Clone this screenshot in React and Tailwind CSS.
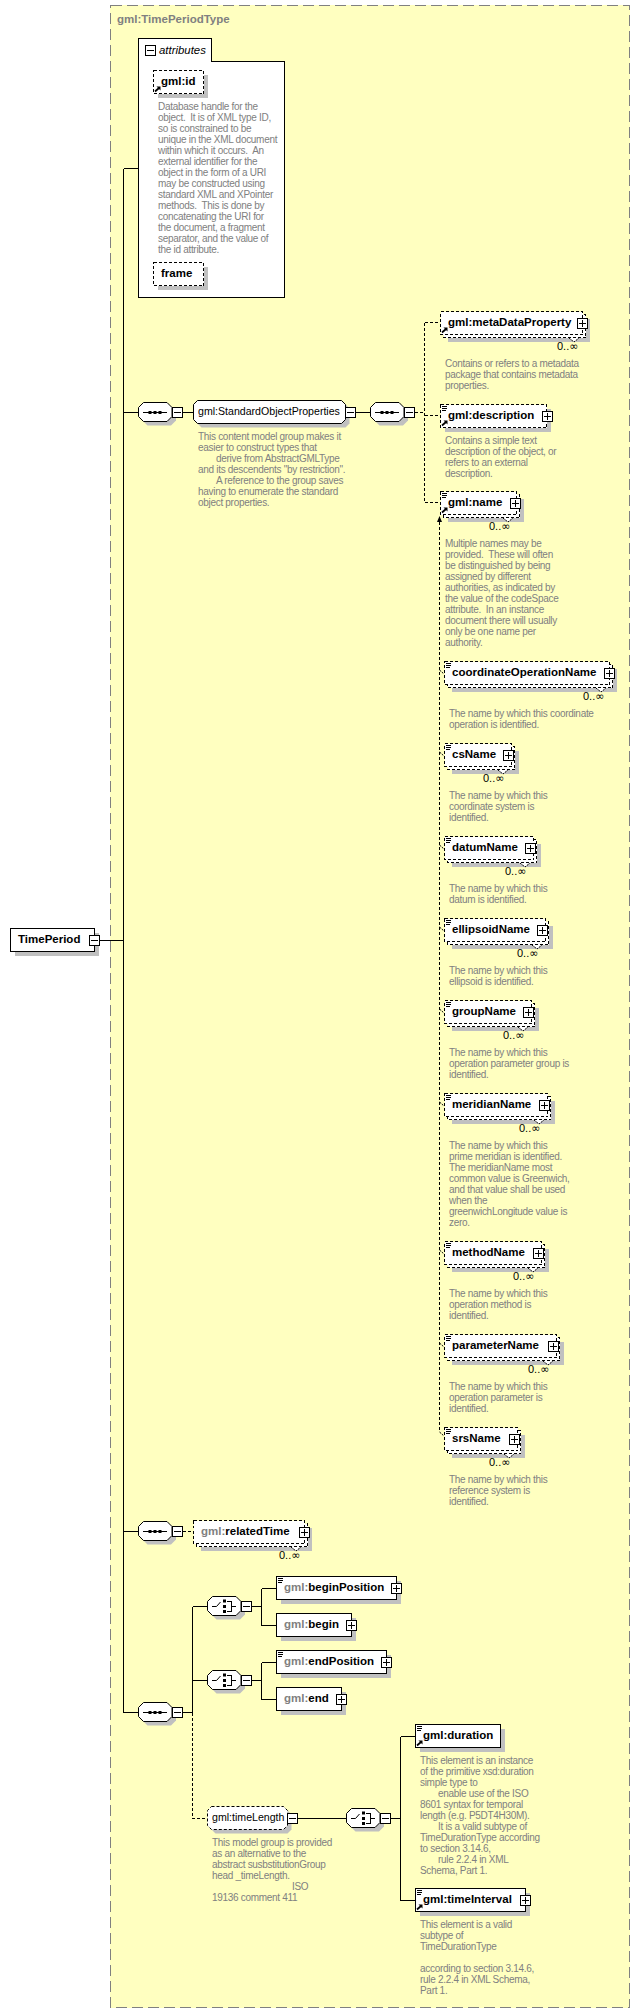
// XML schema diagram for gml:TimePeriod
const SHADOW = '#c0c0c0';

function Plus({ x, y, minus }) {
  return (
    <g shapeRendering="crispEdges">
      <rect x={x + 0.5} y={y + 0.5} width={10} height={10} fill="#fff" stroke="#000" />
      <path d={`M${x + 2} ${y + 5.5}H${x + 9}`} stroke="#000" />
      {!minus && <path d={`M${x + 5.5} ${y + 2}V${y + 9}`} stroke="#000" />}
    </g>
  );
}

function RefArrow({ h }) {
  return (
    <g>
      <path d={`M2 ${h - 2.5}L6 ${h - 6}`} stroke="#000" strokeWidth="1.8" />
      <path d={`M3.5 ${h - 7.5}H7.5V${h - 3.5}Z`} fill="#000" />
    </g>
  );
}

function LinesIcon() {
  return <path d="M2 2.5H7M2 4.5H7M2 6.5H6" stroke="#000" shapeRendering="crispEdges" />;
}

function Doc({ lines, stacked }) {
  return (
    <div className={`whitespace-pre pl-[5px] text-[10px] leading-[11px] tracking-[-0.3px] text-[#808080] ${stacked ? 'pt-[23px]' : 'pt-[7px]'}`}>
      {lines.map((l, i) => (
        <div key={i} className={`h-[11px] ${l.startsWith('>>') ? 'pl-[80px]' : l.startsWith('>') ? 'pl-[18px]' : ''}`}>
          {l.replace(/^>+/, '')}
        </div>
      ))}
    </div>
  );
}

// element or attribute box on the diagram canvas, with its documentation below
function Node({ x, y, w, h = 24, name, prefix, dashed, stacked, lines, refer, plus, occurs, regular, octa, doc }) {
  const dash = dashed ? '3 2' : undefined;
  const chamfer = octa ? 4 : 0;
  const outline = (ox, oy) => {
    const l = ox + 0.5, t = oy + 0.5, r = ox + w - 0.5, b = oy + h - 0.5, c = chamfer;
    return c
      ? `M${l + c} ${t}H${r - c}L${r} ${t + c}V${b - c}L${r - c} ${b}H${l + c}L${l} ${b - c}V${t + c}Z`
      : `M${l} ${t}H${r}V${b}H${l}Z`;
  };
  return (
    <div className="absolute flex flex-col" style={{ left: x, top: y }}>
      <div className="relative shrink-0" style={{ width: w, height: h }}>
        <svg className="absolute left-0 top-0 overflow-visible" width={w} height={h}>
          <path d={outline(stacked ? 7 : 4, stacked ? 7 : 4)} fill={SHADOW} shapeRendering={octa ? undefined : 'crispEdges'} />
          {stacked && (
            <g>
              <path d={`M${w - 14} ${h + 3}L${w - 9} ${h + 7}L${w - 4} ${h + 3}`} fill="#fff" stroke="#000" strokeDasharray="2 1" />
              <path d={outline(3, 3)} fill="#fff" stroke="#000" strokeDasharray={dash} shapeRendering="crispEdges" />
            </g>
          )}
          <path d={outline(0, 0)} fill="#fff" stroke="#000" strokeDasharray={dash} shapeRendering={octa ? undefined : 'crispEdges'} />
          {lines && <LinesIcon />}
          {refer && <RefArrow h={h} />}
          {plus !== undefined && <Plus x={plus - x} y={Math.round(h / 2) - 5} />}
          {octa && <Plus x={w - 1} y={Math.round(h / 2) - 5} minus />}
        </svg>
        <span
          className={`absolute top-0 whitespace-pre leading-[23px] text-black ${regular ? 'left-[5px] text-[10.6px] font-normal' : 'left-[8px] text-[11.5px] font-bold'}`}
        >
          {prefix && <span className="text-[#808080]">{prefix}</span>}
          {name}
        </span>
        {occurs !== undefined && (
          <span className="absolute whitespace-pre text-[11px] leading-[12px] text-black" style={{ left: occurs - x, top: h + 5 }}>
            0..<span className="[font-family:'DejaVu_Sans',sans-serif]">∞</span>
          </span>
        )}
      </div>
      {doc && <Doc lines={doc} stacked={stacked} />}
    </div>
  );
}

// sequence / choice compositor
function Compositor({ x, cy, choice }) {
  return (
    <svg className="absolute overflow-visible" style={{ left: x, top: cy - 10 }} width={34} height={20}>
      <path d="M9.5 4.5H33L38 9.5V18.5L33 23.5H9.5L4.5 18.5V9.5Z" fill={SHADOW} />
      <path d="M5.5 0.5H29L34 5.5V14.5L29 19.5H5.5L0.5 14.5V5.5Z" fill="#fff" stroke="#000" />
      {choice ? (
        <g>
          <path d="M5 10.5H9.5L13.5 6" fill="none" stroke="#000" />
          <path d="M16 3.5h3v3h-3zM16 9h3v3h-3zM16 14h3v3h-3z" fill="#000" />
          <path d="M19.5 5.5H24.5V15.5H19.5M24.5 10.5H29" fill="none" stroke="#000" shapeRendering="crispEdges" />
        </g>
      ) : (
        <g>
          <path d="M5 10.5H29" stroke="#000" shapeRendering="crispEdges" />
          <path d="M10.5 9h3v3h-3zM15.5 9h3v3h-3zM20.5 9h3v3h-3z" fill="#000" />
        </g>
      )}
      <Plus x={34} y={5} minus />
    </svg>
  );
}

const subs = [
  { name: 'coordinateOperationName', y: 661, w: 166, plus: 604, occurs: 583, doc: ['The name by which this coordinate', 'operation is identified.'] },
  { name: 'csName', y: 743, w: 68, plus: 503, occurs: 483, doc: ['The name by which this', 'coordinate system is', 'identified.'] },
  { name: 'datumName', y: 836, w: 90, plus: 525, occurs: 505, doc: ['The name by which this', 'datum is identified.'] },
  { name: 'ellipsoidName', y: 918, w: 102, plus: 537, occurs: 517, doc: ['The name by which this', 'ellipsoid is identified.'] },
  { name: 'groupName', y: 1000, w: 88, plus: 523, occurs: 503, doc: ['The name by which this', 'operation parameter group is', 'identified.'] },
  { name: 'meridianName', y: 1093, w: 104, plus: 539, occurs: 519, doc: ['The name by which this', 'prime meridian is identified.', 'The meridianName most', 'common value is Greenwich,', 'and that value shall be used', 'when the', 'greenwichLongitude value is', 'zero.'] },
  { name: 'methodName', y: 1241, w: 98, plus: 533, occurs: 513, doc: ['The name by which this', 'operation method is', 'identified.'] },
  { name: 'parameterName', y: 1334, w: 113, plus: 548, occurs: 528, doc: ['The name by which this', 'operation parameter is', 'identified.'] },
  { name: 'srsName', y: 1427, w: 74, plus: 509, occurs: 489, doc: ['The name by which this', 'reference system is', 'identified.'] },
];

export default function App() {
  return (
    <div className="relative h-[2013px] w-[640px] overflow-hidden bg-white [font-family:'Liberation_Sans',Arial,sans-serif]">
      {/* type panel */}
      <div className="absolute left-[110px] top-[5px] h-[2003px] w-[520px] bg-[#ffffc0]">
        <svg className="absolute left-0 top-0" width="520" height="2003">
          <rect x="0.5" y="0.5" width="519" height="2002" fill="none" stroke="#808080" strokeDasharray="11 5" shapeRendering="crispEdges" />
        </svg>
        <span className="absolute left-[7px] top-[7px] text-[11.5px] font-bold leading-[14px] text-[#808080]">gml:TimePeriodType</span>
      </div>

      {/* connectors */}
      <svg className="absolute left-0 top-0" width="640" height="2013" fill="none" stroke="#000" shapeRendering="crispEdges">
        <path d="M100 940.5H123.5M123.5 168.5V1712.5M123.5 168.5H138M123.5 412.5H138M123.5 1531.5H138M123.5 1712.5H138" />
        <path d="M183 412.5H193M356 412.5H370" />
        <path d="M183 1712.5H192.5M192.5 1606.5V1712.5M192.5 1606.5H207M192.5 1680.5H207" />
        <path d="M252 1606.5H261.5M261.5 1588.5V1625.5M261.5 1588.5H276M261.5 1625.5H276" />
        <path d="M252 1680.5H261.5M261.5 1662.5V1699.5M261.5 1662.5H276M261.5 1699.5H276" />
        <path d="M298 1818.5H346M391 1818.5H400.5M400.5 1736.5V1900.5M400.5 1736.5H415M400.5 1900.5H415" />
        <g strokeDasharray="3 2">
          <path d="M415 412.5H424.5M424.5 322.5V502.5M424.5 322.5H440M424.5 415.5H440M424.5 502.5H440" />
          <path d="M183 1531.5H193" />
          <path d="M192.5 1713V1818.5H207" />
          <path d="M439.5 522V1432" />
        </g>
      </svg>
      <svg className="absolute left-0 top-0" width="640" height="2013">
        <path d="M439.5 516L437 522H442Z" fill="#000" />
        <path d="M439.5 670L444 674M439.5 752L444 756M439.5 845L444 849M439.5 927L444 931M439.5 1009L444 1013M439.5 1102L444 1106M439.5 1250L444 1254M439.5 1343L444 1347M439.5 1432L444 1436" stroke="#000" strokeDasharray="2 1" fill="none" />
      </svg>

      {/* attributes */}
      <div className="absolute left-[138px] top-[61px] h-[237px] w-[147px] border border-black bg-white" />
      <div className="absolute left-[138px] top-[38px] flex h-[24px] w-[74px] items-start gap-[3px] border border-b-0 border-black bg-white pl-[6px] pt-[6px]">
        <svg className="shrink-0" width="11" height="11"><Plus x={0} y={0} minus /></svg>
        <span className="text-[11.4px] italic leading-[11px] text-black">attributes</span>
      </div>
      <Node x={153} y={70} w={51} name="gml:id" dashed refer doc={['Database handle for the', 'object.  It is of XML type ID,', 'so is constrained to be', 'unique in the XML document', 'within which it occurs.  An', 'external identifier for the', 'object in the form of a URI', 'may be constructed using', 'standard XML and XPointer', 'methods.  This is done by', 'concatenating the URI for', 'the document, a fragment', 'separator, and the value of', 'the id attribute.']} />
      <Node x={153} y={262} w={51} name="frame" dashed />

      {/* root */}
      <Node x={10} y={928} w={85} name="TimePeriod" />
      <svg className="absolute left-[89px] top-[935px]" width="11" height="11"><Plus x={0} y={0} minus /></svg>

      {/* standard object properties */}
      <Compositor x={138} cy={412} />
      <Node x={193} y={400} w={153} name="gml:StandardObjectProperties" regular octa doc={['This content model group makes it', 'easier to construct types that', '>derive from AbstractGMLType', 'and its descendents "by restriction".', '>A reference to the group saves', 'having to enumerate the standard', 'object properties.']} />
      <Compositor x={370} cy={412} />

      <Node x={440} y={311} w={143} name="gml:metaDataProperty" dashed stacked refer plus={577} occurs={557} doc={['Contains or refers to a metadata', 'package that contains metadata', 'properties.']} />
      <Node x={440} y={404} w={107} name="gml:description" dashed lines refer plus={542} doc={['Contains a simple text', 'description of the object, or', 'refers to an external', 'description.']} />
      <Node x={440} y={491} w={77} name="gml:name" dashed stacked lines refer plus={510} occurs={489} doc={['Multiple names may be', 'provided.  These will often', 'be distinguished by being', 'assigned by different', 'authorities, as indicated by', 'the value of the codeSpace', 'attribute.  In an instance', 'document there will usually', 'only be one name per', 'authority.']} />

      {subs.map((s) => (
        <Node key={s.name} x={444} y={s.y} w={s.w} name={s.name} dashed stacked lines plus={s.plus} occurs={s.occurs} doc={s.doc} />
      ))}

      {/* related time */}
      <Compositor x={138} cy={1531} />
      <Node x={193} y={1520} w={112} prefix="gml:" name="relatedTime" dashed stacked plus={299} occurs={279} />

      {/* begin / end */}
      <Compositor x={138} cy={1712} />
      <Compositor x={207} cy={1606} choice />
      <Node x={276} y={1576} w={121} prefix="gml:" name="beginPosition" lines plus={391} />
      <Node x={276} y={1613} w={76} prefix="gml:" name="begin" plus={346} />
      <Compositor x={207} cy={1680} choice />
      <Node x={276} y={1650} w={111} prefix="gml:" name="endPosition" lines plus={381} />
      <Node x={276} y={1687} w={66} prefix="gml:" name="end" plus={336} />

      {/* time length */}
      <Node x={207} y={1806} w={81} name="gml:timeLength" regular octa dashed doc={['This model group is provided', 'as an alternative to the', 'abstract susbstitutionGroup', 'head _timeLength.', '>>ISO', '19136 comment 411']} />
      <Compositor x={346} cy={1818} choice />
      <Node x={415} y={1724} w={86} name="gml:duration" lines refer doc={['This element is an instance', 'of the primitive xsd:duration', 'simple type to', '>enable use of the ISO', '8601 syntax for temporal', 'length (e.g. P5DT4H30M).', '>It is a valid subtype of', 'TimeDurationType according', 'to section 3.14.6,', '>rule 2.2.4 in XML', 'Schema, Part 1.']} />
      <Node x={415} y={1888} w={111} name="gml:timeInterval" lines refer plus={520} doc={['This element is a valid', 'subtype of', 'TimeDurationType', ' ', 'according to section 3.14.6,', 'rule 2.2.4 in XML Schema,', 'Part 1.']} />
    </div>
  );
}
